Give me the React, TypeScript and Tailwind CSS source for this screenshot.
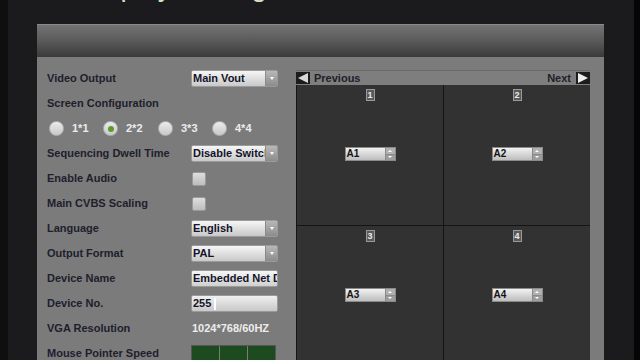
import React from 'react';

const font = { fontFamily: '"Liberation Sans", Arial, sans-serif' };

function Select({ value }: { value: string }) {
  return (
    <div className="flex h-[17px] w-[87px] items-stretch rounded-[2px] border border-[#9a9a9a] bg-gradient-to-b from-[#f6f6f6] to-[#c9c9c9]">
      <span className="flex-1 overflow-hidden whitespace-nowrap pl-[1px] text-[11px] font-bold leading-[15px] text-[#14142a]">
        {value}
      </span>
      <span className="flex w-[12px] items-center justify-center border-l border-[#8a8a8a] bg-gradient-to-b from-[#b8b8b8] to-[#8c8c8c]">
        <span className="h-0 w-0 border-x-[2px] border-t-[3px] border-x-transparent border-t-white" />
      </span>
    </div>
  );
}

function Checkbox() {
  return <div className="ml-[1px] h-[14px] w-[14px] rounded-[2px] border border-[#9a9a9a] bg-gradient-to-b from-[#dedede] to-[#bdbdbd]" />;
}

function Radio({ label, checked }: { label: string; checked?: boolean }) {
  return (
    <div className="flex items-center gap-[8px]">
      <span className="flex h-[15px] w-[15px] items-center justify-center rounded-full border border-[#b0b0b0] bg-gradient-to-b from-[#ececec] to-[#c8c8c8]">
        {checked && <span className="h-[6px] w-[6px] rounded-full bg-[#5e9a2c]" />}
      </span>
      <span className="text-[11px] font-bold text-[#ececec]">{label}</span>
    </div>
  );
}

function Row({ label, children }: { label: string; children?: React.ReactNode }) {
  return (
    <div className="flex h-[25px] items-center">
      <span className="w-[144px] text-[11px] font-bold text-[#20202c]">{label}</span>
      {children}
    </div>
  );
}

function Spin({ value }: { value: string }) {
  return (
    <div className="flex h-[14px] w-[51px] items-stretch border border-[#8a8a8a] bg-gradient-to-b from-[#f2f2f2] to-[#bdbdbd]">
      <span className="flex-1 pl-[1px] text-[10px] font-bold leading-[12px] text-[#141414]">{value}</span>
      <span className="flex w-[10px] flex-col border-l border-[#8a8a8a]">
        <span className="flex flex-1 items-center justify-center border-b border-[#8a8a8a] bg-[#b0b0b0]">
          <span className="h-0 w-0 border-x-[2px] border-b-[2px] border-x-transparent border-b-white" />
        </span>
        <span className="flex flex-1 items-center justify-center bg-[#9c9c9c]">
          <span className="h-0 w-0 border-x-[2px] border-t-[2px] border-x-transparent border-t-white" />
        </span>
      </span>
    </div>
  );
}

function Cell({ n, a }: { n: string; a: string }) {
  return (
    <div className="flex h-[140px] flex-col items-center bg-[#323232]">
      <span className="mt-[4px] h-[12px] w-[9px] border border-[#9a9a9a] bg-[#5a5a5a] text-center text-[9px] font-bold leading-[10px] text-[#eaeaea]">
        {n}
      </span>
      <div className="mt-[46px]">
        <Spin value={a} />
      </div>
    </div>
  );
}

export default function App() {
  return (
    <div className="flex h-[360px] w-[640px] overflow-hidden bg-[#1b1a1c]" style={font}>
      <div className="w-[8px] shrink-0 bg-[#0f0f10]" />
      <div className="flex min-h-0 flex-1 flex-col">
        <div className="h-[24px] shrink-0 overflow-hidden">
          <div className="-mt-[29px] ml-[72px] whitespace-nowrap text-[28px] leading-[32px] text-[#d2e2cc]">Display Settings</div>
        </div>
        <div className="ml-[29px] mr-[30px] flex flex-1 shrink-0 flex-col">
          <div className="h-[33px] shrink-0 border-t border-[#8a8a8a] bg-gradient-to-b from-[#737373] via-[#5a5a5a] to-[#3a3a3a]" />
          <div className="flex flex-1 shrink-0 bg-[#7b7b7b] pl-[10px] pt-[9px]">
            <div className="w-[249px] shrink-0">
              <Row label="Video Output">
                <Select value="Main Vout" />
              </Row>
              <Row label="Screen Configuration" />
              <div className="flex h-[25px] items-center gap-[7px] pl-[2px]">
                <div className="w-[47px]"><Radio label="1*1" /></div>
                <div className="w-[48px]"><Radio label="2*2" checked /></div>
                <div className="w-[47px]"><Radio label="3*3" /></div>
                <Radio label="4*4" />
              </div>
              <Row label="Sequencing Dwell Time">
                <Select value="Disable Switch" />
              </Row>
              <Row label="Enable Audio">
                <Checkbox />
              </Row>
              <Row label="Main CVBS Scaling">
                <Checkbox />
              </Row>
              <Row label="Language">
                <Select value="English" />
              </Row>
              <Row label="Output Format">
                <Select value="PAL" />
              </Row>
              <Row label="Device Name">
                <div className="h-[17px] w-[87px] overflow-hidden whitespace-nowrap rounded-[2px] border border-[#9a9a9a] bg-gradient-to-b from-[#f6f6f6] to-[#d0d0d0] pl-[1px] text-[11px] font-bold leading-[15px] text-[#14142a]">
                  Embedded Net DVR
                </div>
              </Row>
              <Row label="Device No.">
                <div className="flex h-[17px] w-[87px] items-center rounded-[2px] border border-[#9a9a9a] bg-gradient-to-b from-[#f0f0f0] to-[#c8c8c8] pl-[1px] text-[11px] font-bold text-[#14142a]">
                  255
                  <span className="ml-[3px] h-[12px] w-[2px] bg-white" />
                </div>
              </Row>
              <Row label="VGA Resolution">
                <span className="pl-[1px] text-[11px] font-bold text-[#ededed]">1024*768/60HZ</span>
              </Row>
              <Row label="Mouse Pointer Speed">
                <div className="flex h-[18px] w-[85px] gap-[1px] border border-[#555] bg-[#7a7a7a]">
                  <span className="flex-1 bg-[#1d4a1f]" />
                  <span className="flex-1 bg-[#1d4a1f]" />
                  <span className="flex-1 bg-[#1d4a1f]" />
                </div>
              </Row>
            </div>
            <div className="mt-[4px] flex w-[294px] shrink-0 flex-col">
              <div className="flex h-[15px] items-center justify-between border-t border-[#6a6a6a] bg-[#7e7e7e]">
                <div className="flex items-center">
                  <span className="flex h-[12px] w-[14px] items-center justify-center bg-[#1c1c1c]">
                    <span className="h-0 w-0 border-y-[5px] border-r-[10px] border-y-transparent border-r-[#d8d8d8]" />
                  </span>
                  <span className="ml-[4px] text-[11px] font-bold text-[#20202c]">Previous</span>
                </div>
                <div className="flex items-center">
                  <span className="mr-[5px] text-[11px] font-bold text-[#20202c]">Next</span>
                  <span className="flex h-[12px] w-[14px] items-center justify-center bg-[#1c1c1c]">
                    <span className="h-0 w-0 border-y-[5px] border-l-[10px] border-y-transparent border-l-[#eeeeee]" />
                  </span>
                </div>
              </div>
              <div className="grid grid-cols-2 gap-[1px] bg-[#141414] pl-[1px]">
                <Cell n="1" a="A1" />
                <Cell n="2" a="A2" />
                <Cell n="3" a="A3" />
                <Cell n="4" a="A4" />
              </div>
            </div>
          </div>
        </div>
      </div>
      <div className="w-[6px] shrink-0 bg-[#050505]" />
    </div>
  );
}
